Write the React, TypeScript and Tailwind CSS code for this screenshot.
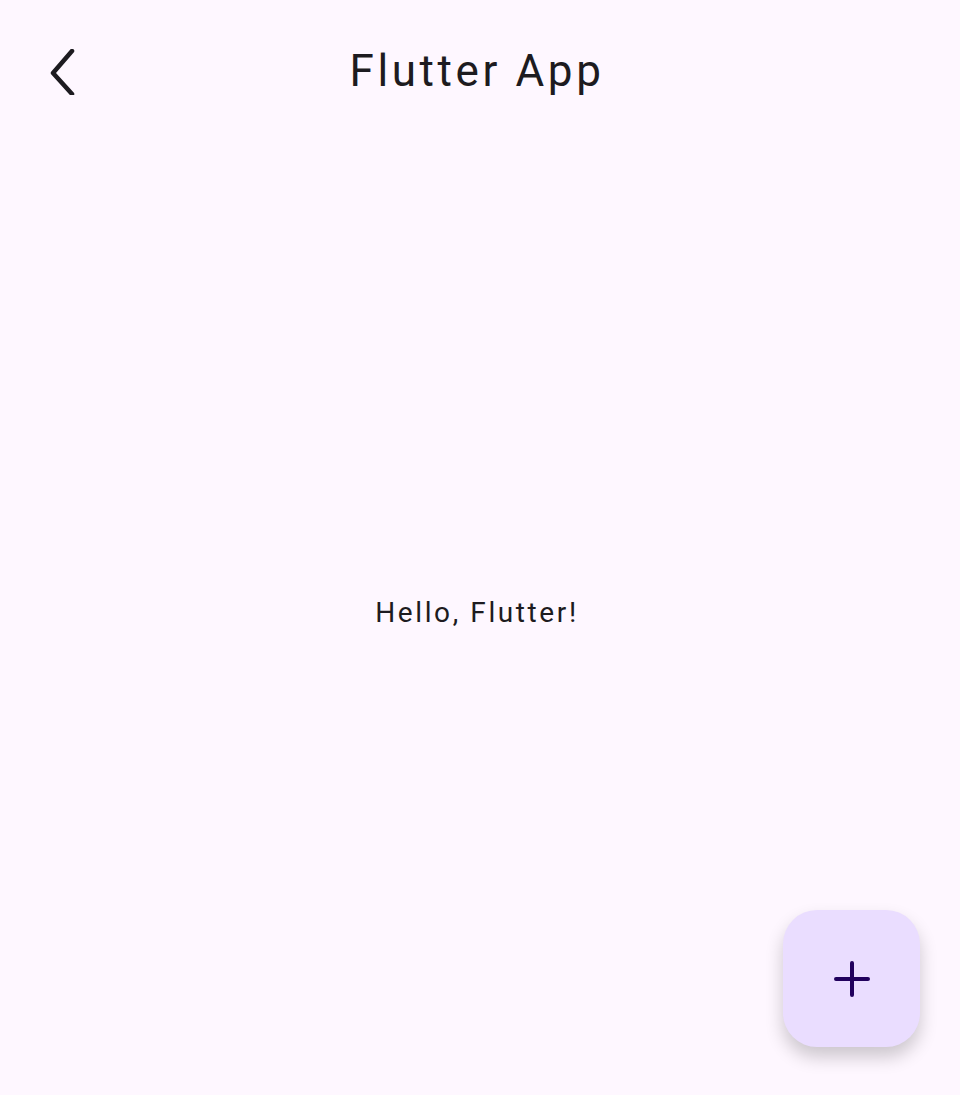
export default function App() {
  return (
    <div
      className="relative flex h-[1095px] w-[960px] flex-col overflow-hidden bg-[#fef7ff] text-[#1d1b20]"
      style={{ fontFamily: "Roboto, 'Noto Sans', sans-serif" }}
    >
      {/* App bar */}
      <header className="relative flex h-[144px] items-center justify-center pr-[6px]">
        <button type="button" className="absolute left-[40px] top-[44px] flex h-[56px] w-[44px] items-center justify-center">
          <svg width="30" height="46" viewBox="0 0 30 46" fill="none">
            <path d="M25 2 L6 24 L25 45" stroke="#1d1b20" strokeWidth="4.5" strokeLinecap="round" strokeLinejoin="round" />
          </svg>
        </button>
        <h1 className="pb-[2px] text-[44px] leading-none tracking-[3.6px]">Flutter App</h1>
      </header>

      {/* Body */}
      <main className="flex flex-1 items-center justify-center pb-[13px] pr-[6px]">
        <p className="text-[28px] leading-none tracking-[2.6px]">Hello, Flutter!</p>
      </main>

      {/* FAB */}
      <button
        type="button"
        className="absolute left-[783px] top-[910px] flex h-[137px] w-[137px] items-center justify-center rounded-[34px] bg-[#eaddff] shadow-[0_10px_18px_rgba(0,0,0,0.2)]"
      >
        <svg width="36" height="36" viewBox="0 0 36 36">
          <path d="M18 2 V34 M2 18 H34" stroke="#21005d" strokeWidth="4" strokeLinecap="round" />
        </svg>
      </button>
    </div>
  );
}
